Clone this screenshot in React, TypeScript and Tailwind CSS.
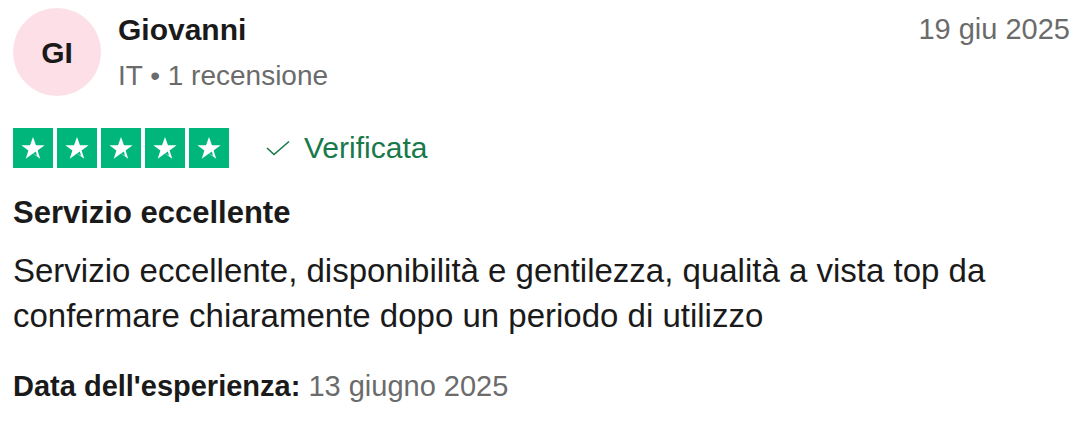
import React from 'react';

function Star() {
  return (
    <div className="w-10 h-10 bg-[#00b67a] flex items-center justify-center">
      <svg viewBox="0 0 24 24" className="w-[28px] h-[28px]">
        <path
          d="M12 2.6l2.55 7.1h7.45l-6.05 4.4 2.3 7.2L12 16.8l-6.25 4.5 2.3-7.2L2 9.7h7.45z"
          fill="#ffffff"
        />
        <path d="M14.4 15.1l1.1 3.6L12 16.8z" fill="#00b67a" />
      </svg>
    </div>
  );
}

export default function App() {
  return (
    <div
      className="w-[1086px] h-[424px] bg-white px-[13px] pt-[8px] text-[#1a1a1a]"
      style={{ fontFamily: '"Liberation Sans", Arial, sans-serif' }}
    >
      <div className="flex items-start justify-between">
        <div className="flex items-start gap-[17px]">
          <div className="w-[88px] h-[88px] rounded-full bg-[#fde0e7] flex items-center justify-center text-[30px] font-bold">
            GI
          </div>
          <div className="pt-[4px]">
            <div className="text-[30px] font-bold leading-[36px]">Giovanni</div>
            <div className="mt-[11px] text-[28px] leading-[34px] text-[#6b6b6b]">IT • 1 recensione</div>
          </div>
        </div>
        <div className="pt-[4px] pr-[3px] text-[29px] leading-[34px] text-[#6b6b6b]">19 giu 2025</div>
      </div>

      <div className="mt-[32px] flex items-center">
        <div className="flex gap-[4px]">
          <Star />
          <Star />
          <Star />
          <Star />
          <Star />
        </div>
        <div className="ml-[37px] flex items-center gap-[14px] text-[#19794a]">
          <svg viewBox="0 0 24 16" className="w-[24px] h-[16px]" fill="none" stroke="currentColor" strokeWidth="1.6">
            <path d="M1 8l7 6.5L23 1.5" />
          </svg>
          <span className="text-[30px] leading-[36px]">Verificata</span>
        </div>
      </div>

      <div className="mt-[27px] text-[31px] font-bold leading-[36px]">Servizio eccellente</div>

      <p className="mt-[17px] text-[33px] leading-[45px]">
        Servizio eccellente, disponibilità e gentilezza, qualità a vista top da
        <br />
        confermare chiaramente dopo un periodo di utilizzo
      </p>

      <div className="mt-[31px] text-[29px] leading-[34px]">
        <span className="font-bold">Data dell'esperienza:</span>{' '}
        <span className="text-[#6b6b6b]">13 giugno 2025</span>
      </div>
    </div>
  );
}
